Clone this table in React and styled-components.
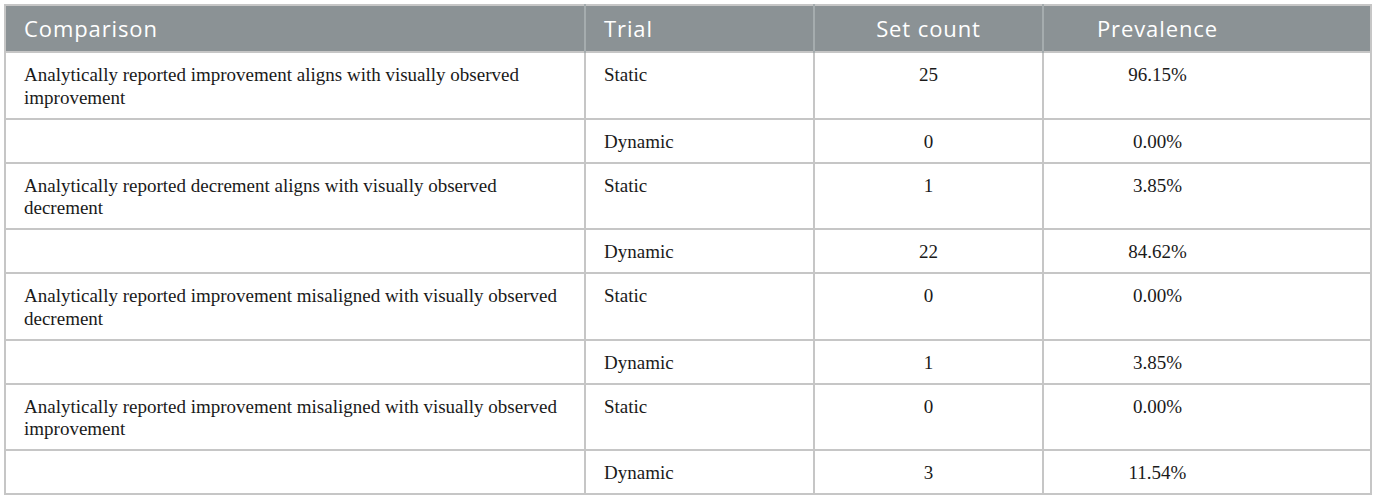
import React from "react";
import styled, { createGlobalStyle } from "styled-components";

const Global = createGlobalStyle`
  html, body { margin: 0; padding: 0; background: #ffffff; }
`;

const Page = styled.div`
  padding: 4px 5px 6px 4px;
`;

const Table = styled.table`
  width: 1366px;
  border-collapse: collapse;
  table-layout: fixed;
  border: 2px solid #c6c6c6;
`;

const HeadCell = styled.th`
  background: #8b9295;
  color: #ffffff;
  font-family: "Open Sans", "Lato", sans-serif;
  font-weight: 400;
  font-size: 22px;
  letter-spacing: 0.9px;
  height: 47px;
  padding: 0 ${(p) => (p.$padRight ? p.$padRight : 18)}px 2px 18px;
  text-align: ${(p) => (p.$center ? "center" : "left")};
  vertical-align: middle;
  border-left: 2px solid #a5acae;
  box-sizing: border-box;
  &:first-child { border-left: none; }
`;

const Cell = styled.td`
  font-family: "Liberation Serif", "Times New Roman", serif;
  font-size: 19px;
  line-height: 22.5px;
  color: #1a1a1a;
  padding: 11px ${(p) => (p.$padRight ? p.$padRight : 18)}px 8.5px 18px;
  text-align: ${(p) => (p.$center ? "center" : "left")};
  vertical-align: top;
  border: 2px solid #c6c6c6;
`;

const rows = [
  ["Analytically reported improvement aligns with visually observed improvement", "Static", "25", "96.15%"],
  ["", "Dynamic", "0", "0.00%"],
  ["Analytically reported decrement aligns with visually observed decrement", "Static", "1", "3.85%"],
  ["", "Dynamic", "22", "84.62%"],
  ["Analytically reported improvement misaligned with visually observed decrement", "Static", "0", "0.00%"],
  ["", "Dynamic", "1", "3.85%"],
  ["Analytically reported improvement misaligned with visually observed improvement", "Static", "0", "0.00%"],
  ["", "Dynamic", "3", "11.54%"],
];

export default function App() {
  return (
    <Page>
      <Global />
      <Table>
        <colgroup>
          <col style={{ width: 580 }} />
          <col style={{ width: 229 }} />
          <col style={{ width: 229 }} />
          <col style={{ width: 328 }} />
        </colgroup>
        <thead>
          <tr>
            <HeadCell>Comparison</HeadCell>
            <HeadCell>Trial</HeadCell>
            <HeadCell $center>Set count</HeadCell>
            <HeadCell $center $padRight={117}>Prevalence</HeadCell>
          </tr>
        </thead>
        <tbody>
          {rows.map((r, i) => (
            <tr key={i}>
              <Cell $padRight={20}>{r[0]}</Cell>
              <Cell>{r[1]}</Cell>
              <Cell $center>{r[2]}</Cell>
              <Cell $center $padRight={117}>{r[3]}</Cell>
            </tr>
          ))}
        </tbody>
      </Table>
    </Page>
  );
}
